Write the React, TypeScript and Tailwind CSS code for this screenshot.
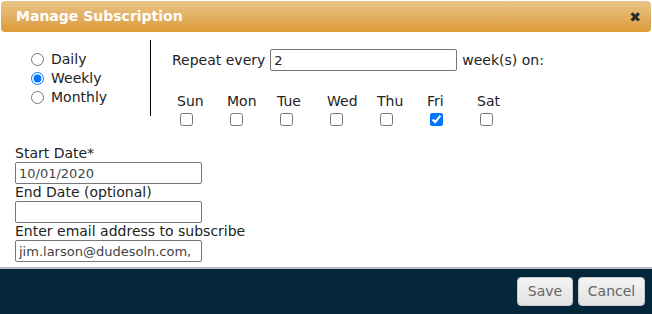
const days = ["Sun", "Mon", "Tue", "Wed", "Thu", "Fri", "Sat"];

const App = () => {
  return (
    <div className="w-[652px] h-[314px] bg-white flex flex-col overflow-hidden text-[14px] text-[#222] font-['DejaVu_Sans',Verdana,sans-serif]">
      {/* Title bar */}
      <div className="mx-[1px] mt-[1px] h-[31px] shrink-0 rounded-[4px] bg-gradient-to-b from-[#e9c587] to-[#dc9b35] flex items-center justify-between pl-[15px] pr-[10px]">
        <span className="text-white font-bold text-[14px]">Manage Subscription</span>
        <span className="text-[#2a2a2a] font-bold text-[14px] leading-none">✖</span>
      </div>

      {/* Body */}
      <div className="flex-1 flex flex-col">
        <div className="flex pt-[8px]">
          <div className="w-[150px] pl-[29px] pt-[10px] flex flex-col gap-[1px]">
            {["Daily", "Weekly", "Monthly"].map((f) => (
              <label key={f} className="flex items-center h-[18px]">
                <input
                  type="radio"
                  name="freq"
                  defaultChecked={f === "Weekly"}
                  className="w-[13px] h-[13px] mr-[7px] ml-[2px] accent-[#0075ff]"
                />
                {f}
              </label>
            ))}
          </div>
          <div className="w-px h-[76px] bg-black" />
          <div className="pl-[21px] pt-[9px]">
            <div className="flex items-center">
              <span>Repeat every</span>
              <input
                type="text"
                defaultValue="2"
                className="w-[187px] h-[22px] ml-[5px] mr-[5px] border border-[#767676] rounded-[2px] px-[3px] text-[13px] text-[#222] outline-none"
              />
              <span>week(s) on:</span>
            </div>
            <div className="flex mt-[22px] ml-[5px]">
              {days.map((d) => (
                <div key={d} className="w-[50px] flex flex-col items-start">
                  <span className="leading-[17px]">{d}</span>
                  <input
                    type="checkbox"
                    defaultChecked={d === "Fri"}
                    className="w-[13px] h-[13px] mt-[3px] ml-[3px] accent-[#0075ff]"
                  />
                </div>
              ))}
            </div>
          </div>
        </div>

        <div className="pl-[15px] pt-[19px] flex flex-col">
          <span className="leading-[17px]">Start Date*</span>
          <input
            type="text"
            defaultValue="10/01/2020"
            className="w-[187px] h-[22px] border border-[#767676] rounded-[2px] px-[3px] text-[13px] text-[#444] outline-none"
          />
          <span className="leading-[17px]">End Date (optional)</span>
          <input
            type="text"
            className="w-[187px] h-[22px] border border-[#767676] rounded-[2px] px-[3px] outline-none"
          />
          <span className="leading-[17px]">Enter email address to subscribe</span>
          <input
            type="text"
            defaultValue="jim.larson@dudesoln.com,"
            className="w-[187px] h-[22px] border border-[#767676] rounded-[2px] px-[3px] text-[13px] text-[#444] outline-none"
          />
        </div>
      </div>

      {/* Footer */}
      <div className="h-[47px] shrink-0 border-t-[2px] border-[#b8bec3] bg-[#03263a] flex items-center justify-end gap-[5px] pr-[7px]">
        <button className="h-[29px] w-[56px] rounded-[4px] border border-[#c8c8c8] bg-gradient-to-b from-[#f4f4f4] to-[#e2e2e2] text-[#666] text-[14px]">
          Save
        </button>
        <button className="h-[29px] w-[67px] rounded-[4px] border border-[#c8c8c8] bg-gradient-to-b from-[#f4f4f4] to-[#e2e2e2] text-[#666] text-[14px]">
          Cancel
        </button>
      </div>
    </div>
  );
};

export default App;
